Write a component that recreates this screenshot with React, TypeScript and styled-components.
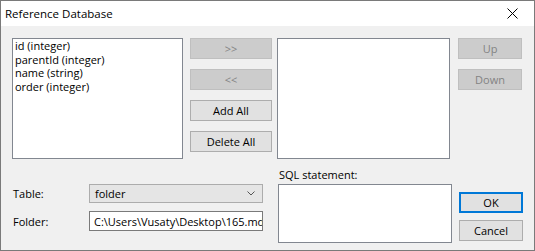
import React from 'react';
import styled, { createGlobalStyle } from 'styled-components';

const GlobalStyle = createGlobalStyle`
	html, body {
		margin: 0;
		padding: 0;
		background: #ffffff;
	}
	* {
		box-sizing: border-box;
	}
`;

const Window = styled.div`
	width: 535px;
	height: 251px;
	border: 1px solid #7a7a7a;
	display: flex;
	flex-direction: column;
	font-family: "Open Sans", "Liberation Sans", sans-serif;
	font-size: 11px;
	color: #000;
	background: #f0f0f0;
`;

const TitleBar = styled.div`
	height: 25px;
	background: #fff;
	display: flex;
	align-items: center;
	justify-content: space-between;
	padding-left: 4px;
	padding-right: 16px;
	flex-shrink: 0;
`;

const Title = styled.span`
	font-size: 11.5px;
	line-height: 15px;
`;

const CloseIcon = styled.svg`
	width: 11px;
	height: 11px;
`;

const Body = styled.div`
	flex: 1;
	padding: 12px 0 0 11px;
	display: flex;
	flex-direction: column;
`;

const TopRow = styled.div`
	display: flex;
	height: 121px;
`;

const ListBox = styled.div<{ $w: number; $ml?: number }>`
	width: ${p => p.$w}px;
	margin-left: ${p => p.$ml || 0}px;
	height: 100%;
	background: #fff;
	border: 1px solid #828790;
	padding: 0 2px;
	overflow: hidden;
`;

const ListItem = styled.div`
	line-height: 13.5px;
	white-space: nowrap;
`;

const ButtonColumn = styled.div<{ $w: number; $ml: number }>`
	width: ${p => p.$w}px;
	margin-left: ${p => p.$ml}px;
	display: flex;
	flex-direction: column;
	gap: 10px;
`;

const Button = styled.div<{ $disabled?: boolean; $default?: boolean }>`
	height: 21px;
	display: flex;
	align-items: center;
	justify-content: center;
	background: ${p => (p.$disabled ? '#cccccc' : '#e1e1e1')};
	border: ${p => (p.$default ? '2px solid #0078d7' : p.$disabled ? '1px solid #bfbfbf' : '1px solid #adadad')};
	color: ${p => (p.$disabled ? '#838383' : '#000')};
	white-space: nowrap;
`;

const BottomRow = styled.div`
	display: flex;
	flex: 1;
`;

const Form = styled.div`
	width: 251px;
	padding-top: 25px;
	display: flex;
	flex-direction: column;
	gap: 8px;
`;

const FieldRow = styled.div`
	display: flex;
	align-items: center;
`;

const Label = styled.span`
	width: 77px;
	padding-left: 1px;
`;

const Combo = styled.div`
	width: 174px;
	height: 19px;
	background: #e5e5e5;
	border: 1px solid #acacac;
	display: flex;
	align-items: center;
	justify-content: space-between;
	padding: 0 7px 0 5px;
`;

const Chevron = styled.svg`
	width: 8px;
	height: 5px;
`;

const TextInput = styled.div`
	width: 174px;
	height: 20px;
	background: #fff;
	border: 1px solid #7a7a7a;
	display: flex;
	align-items: center;
	padding-left: 4px;
	overflow: hidden;
	white-space: nowrap;
`;

const SqlColumn = styled.div`
	width: 174px;
	margin-left: 15px;
	padding-top: 8px;
	display: flex;
	flex-direction: column;
	gap: 2px;
`;

const SqlLabel = styled.span`
	line-height: 15px;
	padding-left: 1px;
`;

const SqlBox = styled.div`
	height: 59px;
	background: #fff;
	border: 1px solid #828790;
`;

const DialogButtons = styled.div`
	width: 64px;
	margin-left: 7px;
	padding-top: 33px;
	display: flex;
	flex-direction: column;
	gap: 7px;
`;

const fields = ['id (integer)', 'parentId (integer)', 'name (string)', 'order (integer)'];

const App = () => {
	return (
		<>
			<GlobalStyle />
			<Window>
				<TitleBar>
					<Title>Reference Database</Title>
					<CloseIcon viewBox="0 0 11 11">
						<path d="M0.5 0.5 L10.5 10.5 M10.5 0.5 L0.5 10.5" stroke="#000" strokeWidth="1" fill="none" />
					</CloseIcon>
				</TitleBar>
				<Body>
					<TopRow>
						<ListBox $w={171}>
							{fields.map(f => (
								<ListItem key={f}>{f}</ListItem>
							))}
						</ListBox>
						<ButtonColumn $w={82} $ml={7}>
							<Button $disabled>&gt;&gt;</Button>
							<Button $disabled>&lt;&lt;</Button>
							<Button>Add All</Button>
							<Button>Delete All</Button>
						</ButtonColumn>
						<ListBox $w={173} $ml={5} />
						<ButtonColumn $w={64} $ml={8}>
							<Button $disabled>Up</Button>
							<Button $disabled>Down</Button>
						</ButtonColumn>
					</TopRow>
					<BottomRow>
						<Form>
							<FieldRow>
								<Label>Table:</Label>
								<Combo>
									<span>folder</span>
									<Chevron viewBox="0 0 8 5">
										<path d="M0.5 0.5 L4 4 L7.5 0.5" stroke="#555" strokeWidth="1" fill="none" />
									</Chevron>
								</Combo>
							</FieldRow>
							<FieldRow>
								<Label>Folder:</Label>
								<TextInput>C:\Users\Vusaty\Desktop\165.mdb</TextInput>
							</FieldRow>
						</Form>
						<SqlColumn>
							<SqlLabel>SQL statement:</SqlLabel>
							<SqlBox />
						</SqlColumn>
						<DialogButtons>
							<Button $default>OK</Button>
							<Button>Cancel</Button>
						</DialogButtons>
					</BottomRow>
				</Body>
			</Window>
		</>
	);
};

export default App;
